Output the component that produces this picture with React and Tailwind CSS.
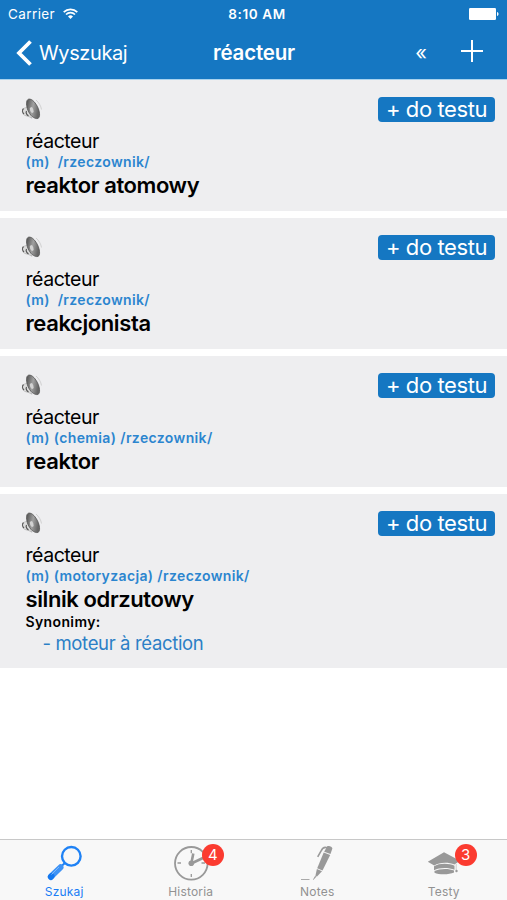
import React from 'react';

/* ─── Data ────────────────────────────────────────────────────────────── */
const entries = [
  { id: 1, meta: '(m)\u00a0 /rzeczownik/', translation: 'reaktor atomowy' },
  { id: 2, meta: '(m)\u00a0 /rzeczownik/', translation: 'reakcjonista' },
  { id: 3, meta: '(m) (chemia) /rzeczownik/', translation: 'reaktor' },
  {
    id: 4,
    meta: '(m) (motoryzacja) /rzeczownik/',
    translation: 'silnik odrzutowy',
    synonym: '- moteur à réaction',
  },
];

/* ─── Icons ───────────────────────────────────────────────────────────── */
const WifiIcon = () => (
  <svg width="15" height="11" viewBox="0 0 15 11" fill="none" stroke="white" strokeWidth="1.7" className="-mt-[2px]">
    <path d="M0.7 4.1a9.7 9.7 0 0 1 13.6 0" />
    <path d="M3 6.5a6.4 6.4 0 0 1 9 0" />
    <path d="M7.5 11 5 8.5a3.6 3.6 0 0 1 5 0z" fill="white" stroke="none" />
  </svg>
);

const BatteryIcon = () => (
  <svg width="30" height="12" viewBox="0 0 30 12" fill="white" className="-mt-px">
    <rect width="27" height="12" rx="1.2" />
    <path d="M28 4c2 .6 2 3.4 0 4z" />
  </svg>
);

const SpeakerIcon = () => (
  <svg width="24" height="24" viewBox="0 0 24 24">
    <defs>
      <linearGradient id="cone" x1="0" y1="0" x2="1" y2="0.3">
        <stop offset="0" stopColor="#4c4c4c" />
        <stop offset="0.55" stopColor="#a0a0a0" />
        <stop offset="1" stopColor="#666" />
      </linearGradient>
    </defs>
    <path d="M7.500 10.500c-3-.3-5.800 2-5 5 .6 2.500 3 3.500 5.500 3.700l4 2z" fill="#dcdcdc" stroke="#aaa" strokeWidth="0.600" />
    <path d="M3.500 11.500c-1.500 1.500-1 4 .5 5.500M6.500 14c-1 1.800.3 4.200 2 4.900" fill="none" stroke="#555" strokeWidth="1.200" />
    <path d="M8.500 2.200C6.200 3 6 7 7.300 11.500c1.300 4.500 5 9.800 9.500 10.100 3.600.2 3.300-5.500 1.400-10.300C16.200 6.500 12 1.200 8.500 2.200z" fill="url(#cone)" stroke="#555" strokeWidth="0.800" />
    <ellipse cx="11.700" cy="13" rx="1.700" ry="3" transform="rotate(-19 11.700 13)" fill="#d2d2d2" />
    <path d="M16 3c2.800 2.500 5 6 5.500 9.500" fill="none" stroke="#cdcdcd" strokeWidth="0.900" />
  </svg>
);

const SearchIcon = () => (
  <svg width="36" height="36" viewBox="0 0 36 36" fill="none">
    <circle cx="25.300" cy="11.300" r="9.300" stroke="#1f82f5" strokeWidth="2.400" />
    <path d="M18.700 18.300l-3.500 3" stroke="#1f82f5" strokeWidth="2" />
    <path d="M14.500 22.300 5 31.500" stroke="#3f93f5" strokeWidth="6" strokeLinecap="round" />
    <path d="M5.500 31.200 4.800 32" stroke="#1277ef" strokeWidth="6" strokeLinecap="round" />
    <path d="M13 22 5.500 29.500" stroke="#7db8fa" strokeWidth="1" />
  </svg>
);

const ClockIcon = () => (
  <svg width="36" height="36" viewBox="0 0 36 36" fill="none" stroke="#999">
    <circle cx="18.300" cy="18.300" r="16.300" strokeWidth="1.800" />
    <path d="M18.300 5v3.200M18.300 29v3M4.500 18h3.500M28.500 18H32" strokeWidth="1.300" />
    <path d="M18.300 18.500 20.300 8.500" strokeWidth="2.600" />
    <path d="M18.300 18.500 31 12.500" strokeWidth="2.600" />
    <circle cx="18.300" cy="18.300" r="2.800" fill="#999" stroke="none" />
  </svg>
);

const PenIcon = () => (
  <svg width="36" height="36" viewBox="0 0 36 36" fill="#999">
    <path d="M28 1.500c1.200-1.300 5.800.2 5.300 2.300l-1.800 5.200-6.300-2.300z" />
    <path d="M24.700 7.500l6.500 2.400-7.700 15.600-5.300-2.200z" />
    <path d="M17.900 24.100l5.100 2.100-5 5.300-1.600-.7z" />
    <path d="M16 31l1.600.6-3.400 3.300-.3-.2z" />
    <path d="M28 2.700c-3.200-1.200-4.700.6-5.900 3.200l-3.400 6" fill="none" stroke="#999" strokeWidth="1.600" />
    <path d="M2 34.500h8.500" fill="none" stroke="#aaa" strokeWidth="1" />
  </svg>
);

const CapIcon = () => (
  <svg width="36" height="36" viewBox="0 0 36 36" fill="#999">
    <path d="M1.800 16.800 18 7.300l16 8.500-5.500 3.700c-6-2.500-15-2.500-20.300 1z" />
    <path d="M8 21.300c5-3.200 15-3.200 20.500-.5v4c-6-2.500-15-2.500-20.500.4z" />
    <path d="M8.500 26c5-2.700 15-2.700 19.500-.5v2c-5 2.300-15 2.300-19.500.2z" />
    <path d="M30.200 19v6" stroke="#bbb" strokeWidth="0.700" />
    <circle cx="30.500" cy="26" r="1.200" />
  </svg>
);

/* ─── Header ──────────────────────────────────────────────────────────── */
const Header = () => (
  <header className="h-20 shrink-0 border-b border-[#a9d3ee] bg-[#1577c2] text-white">
    <div className="grid h-7 grid-cols-3 items-center px-2 text-[13.5px]">
      <div className="flex items-center gap-[8px]">
        <span className="tracking-[0.4px]">Carrier</span>
        <WifiIcon />
      </div>
      <span className="pl-[7px] text-center text-[13.5px] font-semibold tracking-[0.6px] whitespace-nowrap">8:10 AM</span>
      <div className="flex justify-end">
        <BatteryIcon />
      </div>
    </div>
    <div className="grid h-[49px] grid-cols-3 items-center">
      <div className="flex items-center gap-[7px] pl-4">
        <svg width="16" height="26" viewBox="0 0 16 26" fill="none" stroke="white" strokeWidth="3.800">
          <path d="M14.500 1.500 3 13l11.500 11.500" />
        </svg>
        <span className="text-[20px] leading-6 tracking-[-0.4px]">Wyszukaj</span>
      </div>
      <h1 className="pl-px text-center text-[20.5px] font-semibold leading-6 tracking-[-0.2px]">réacteur</h1>
      <div className="flex items-center justify-end gap-[34px] pr-6">
        <span className="pt-px text-[20px] leading-6">«</span>
        <svg width="22" height="22" viewBox="0 0 22 22" stroke="white" strokeWidth="2" className="-mt-1">
          <path d="M11 0v22M0 11h22" />
        </svg>
      </div>
    </div>
  </header>
);

/* ─── Entry ───────────────────────────────────────────────────────────── */
const Entry = ({ entry }) => (
  <article className={`bg-[#eeeef0] pl-[25.5px] pr-3 ${entry.synonym ? 'h-[174px]' : 'h-[131px]'}`}>
    <div className="flex h-[49px] items-start justify-between pt-[17px]">
      <div className="-ml-[6px]">
        <SpeakerIcon />
      </div>
      <button className="h-[25px] w-[117px] rounded-[4px] bg-[#1577c2] text-[22px] leading-[25px] tracking-[-0.4px] whitespace-nowrap text-white">
        + do testu
      </button>
    </div>
    <p className="text-[19.5px] leading-6 tracking-[-0.45px]">réacteur</p>
    <p className="text-[14px] font-semibold leading-[18px] tracking-[0.37px] text-[#2b85cf]">{entry.meta}</p>
    <p className="text-[22px] font-semibold leading-7 tracking-[-0.4px]">{entry.translation}</p>
    {entry.synonym && (
      <>
        <p className="text-[14px] font-semibold leading-[18px] tracking-[0.37px]">Synonimy:</p>
        <p className="pl-[17px] text-[18.5px] leading-6 tracking-[-0.35px] text-[#2b7fc6]">{entry.synonym}</p>
      </>
    )}
  </article>
);

/* ─── Tab bar ─────────────────────────────────────────────────────────── */
const Tab = ({ icon, label, badge, active }) => (
  <div className="flex flex-1 flex-col items-center pt-[5px]">
    <div className="relative">
      {icon}
      {badge && (
        <span className="absolute -top-px left-[29px] flex size-[22px] items-center justify-center rounded-full bg-[#fb3b30] text-[15px] text-white">
          {badge}
        </span>
      )}
    </div>
    <span className={`mt-[3px] text-[12px] leading-4 tracking-[0.2px] ${active ? 'text-[#1a7df5]' : 'text-[#929292]'}`}>
      {label}
    </span>
  </div>
);

const App = () => (
  <div
    className="flex h-[900px] w-[507px] flex-col overflow-hidden bg-white text-black"
    style={{ fontFamily: 'Inter, "Liberation Sans", sans-serif' }}
  >
    <Header />
    <main className="flex flex-1 flex-col gap-[7px]">
      {entries.map((entry) => (
        <Entry key={entry.id} entry={entry} />
      ))}
    </main>
    <nav className="flex h-[61px] shrink-0 border-t border-[#c8c8c8] bg-[#f8f8f8] pl-px">
      <Tab icon={<SearchIcon />} label="Szukaj" active />
      <Tab icon={<ClockIcon />} label="Historia" badge="4" />
      <Tab icon={<PenIcon />} label="Notes" />
      <Tab icon={<CapIcon />} label="Testy" badge="3" />
    </nav>
  </div>
);

export default App;
